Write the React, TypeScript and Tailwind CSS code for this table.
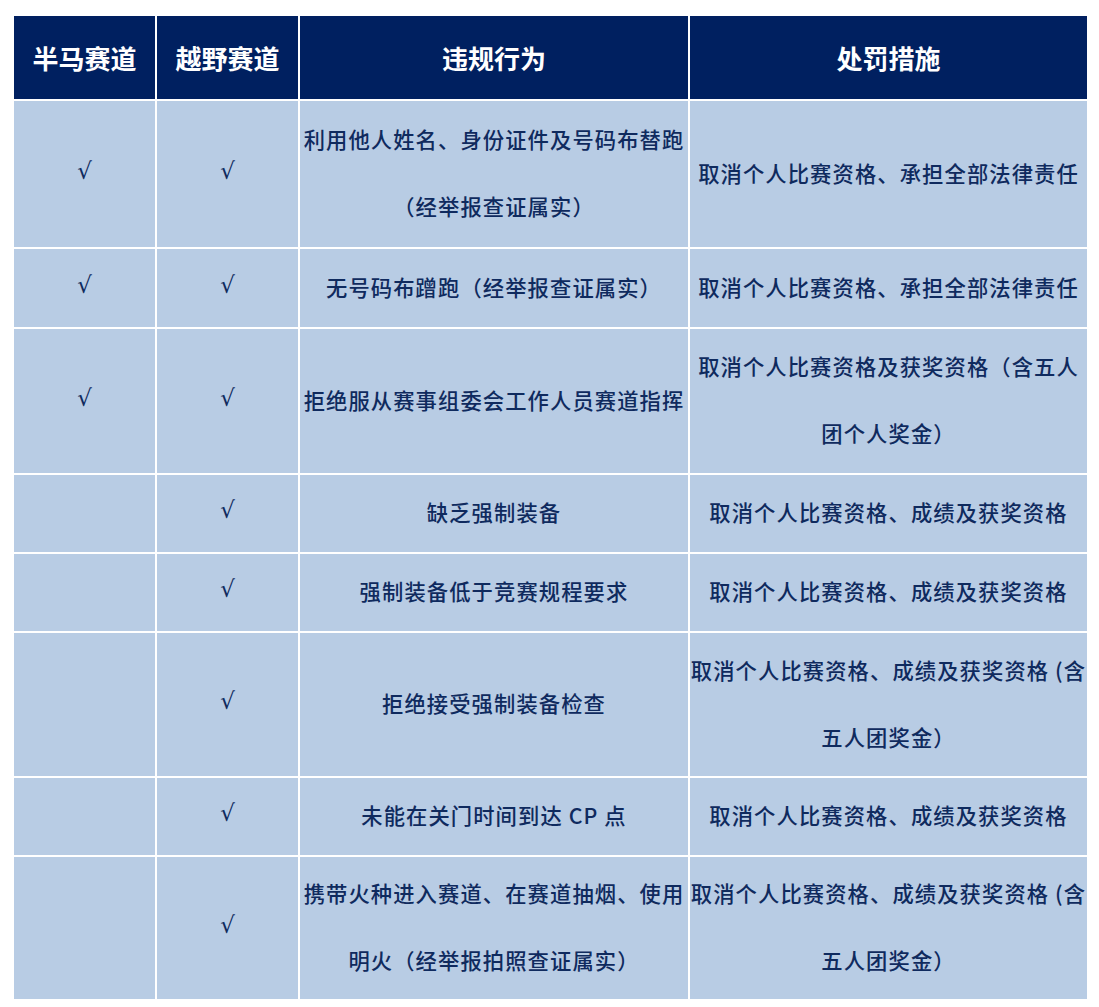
import React from "react";

const rows: { a: boolean; b: boolean; v: string[]; p: string[]; h: string }[] = [
  { a: true, b: true, v: ["利用他人姓名、身份证件及号码布替跑", "（经举报查证属实）"], p: ["取消个人比赛资格、承担全部法律责任"], h: "h-[146px]" },
  { a: true, b: true, v: ["无号码布蹭跑（经举报查证属实）"], p: ["取消个人比赛资格、承担全部法律责任"], h: "h-[78px]" },
  { a: true, b: true, v: ["拒绝服从赛事组委会工作人员赛道指挥"], p: ["取消个人比赛资格及获奖资格（含五人", "团个人奖金）"], h: "h-[144px]" },
  { a: false, b: true, v: ["缺乏强制装备"], p: ["取消个人比赛资格、成绩及获奖资格"], h: "h-[77px]" },
  { a: false, b: true, v: ["强制装备低于竞赛规程要求"], p: ["取消个人比赛资格、成绩及获奖资格"], h: "h-[77px]" },
  { a: false, b: true, v: ["拒绝接受强制装备检查"], p: ["取消个人比赛资格、成绩及获奖资格 (含", "五人团奖金）"], h: "h-[143px]" },
  { a: false, b: true, v: ["未能在关门时间到达 CP 点"], p: ["取消个人比赛资格、成绩及获奖资格"], h: "h-[77px]" },
  { a: false, b: true, v: ["携带火种进入赛道、在赛道抽烟、使用", "明火（经举报拍照查证属实）"], p: ["取消个人比赛资格、成绩及获奖资格 (含", "五人团奖金）"], h: "h-[142px]" },
];

const font = "font-['Noto_Sans_CJK_SC','Noto_Sans',sans-serif]";

function Cell({ lines, h }: { lines: string[]; h: string }) {
  return (
    <div className={`${h} bg-[#b8cce4] flex flex-col items-center justify-center text-center text-[#0f2a5e] text-[21.3px] font-medium leading-[67px] tracking-[1.1px] whitespace-nowrap overflow-visible pb-[4px]`}>
      {lines.map((l, i) => (
        <div key={i}>{l}</div>
      ))}
    </div>
  );
}

function Check({ on, h }: { on: boolean; h: string }) {
  return (
    <div className={`${h} bg-[#b8cce4] flex items-center justify-center text-[#0f2a5e] text-[23px] font-['DejaVu_Sans',sans-serif] pb-[6px]`}>
      {on ? "√" : ""}
    </div>
  );
}

export default function App() {
  const headers = ["半马赛道", "越野赛道", "违规行为", "处罚措施"];
  return (
    <div className={`bg-white min-h-[1007px] pt-[16px] pl-[14px] ${font}`}>
      <div className="grid grid-cols-[141px_141px_388px_397px] gap-[2px]">
        {headers.map((t) => (
          <div key={t} className="h-[83px] bg-[#002060] flex items-center justify-center text-white text-[26px] font-bold">
            {t}
          </div>
        ))}
        {rows.map((r, i) => (
          <React.Fragment key={i}>
            <Check on={r.a} h={r.h} />
            <Check on={r.b} h={r.h} />
            <Cell lines={r.v} h={r.h} />
            <Cell lines={r.p} h={r.h} />
          </React.Fragment>
        ))}
      </div>
    </div>
  );
}
